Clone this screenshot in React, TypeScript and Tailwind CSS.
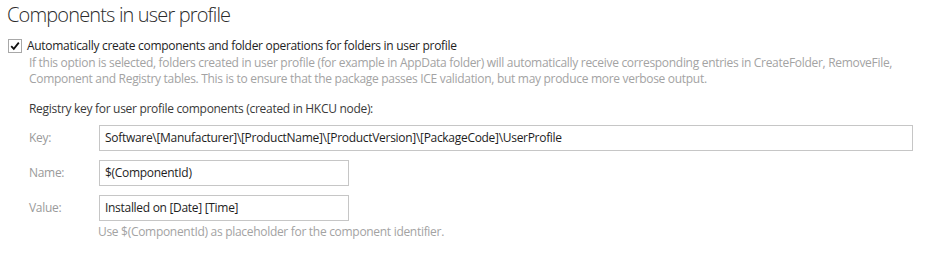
import React from "react";

const font = { fontFamily: '"Open Sans", "Noto Sans", sans-serif' };

function Field({ label, value, wide }: { label: string; value: string; wide?: boolean }) {
  return (
    <div className="flex items-center h-[26px]">
      <div className="w-[70px] text-[12px] text-[#9a9a9a]">{label}</div>
      <div
        className={
          "h-[26px] border border-[#c6c6c6] bg-white flex items-center px-[5px] text-[12px] text-[#1e1e1e] " +
          (wide ? "w-[814px]" : "w-[250px]")
        }
      >
        {value}
      </div>
    </div>
  );
}

export default function App() {
  return (
    <div className="w-[927px] h-[255px] bg-white pl-[7px] tracking-[-0.3px]" style={font}>
      <h2 className="text-[20px] font-light text-[#2b2b2b] leading-[30px] tracking-[-0.85px]">
        Components in user profile
      </h2>

      <div className="flex items-center mt-[8px] h-[16px]">
        <div className="w-[14px] h-[14px] border border-[#a8a8a8] bg-white flex items-center justify-center ml-[1px]">
          <svg width="10" height="10" viewBox="0 0 10 10">
            <path d="M1.2 5.2 L3.8 7.8 L8.8 1.6" fill="none" stroke="#111" strokeWidth="1.8" />
          </svg>
        </div>
        <span className="ml-[5px] text-[12px] text-[#1e1e1e]">
          Automatically create components and folder operations for folders in user profile
        </span>
      </div>

      <div className="ml-[22px] mt-[1px] text-[12px] leading-[16px] text-[#a3a3a3] w-[870px]">
        If this option is selected, folders created in user profile (for example in AppData folder) will automatically receive corresponding entries in CreateFolder, RemoveFile, Component and Registry tables. This is to ensure that the package passes ICE validation, but may produce more verbose output.
      </div>

      <div className="ml-[22px] mt-[14px] text-[12px] text-[#3a3a3a] leading-[16px]">
        Registry key for user profile components (created in HKCU node):
      </div>

      <div className="ml-[22px] mt-[8px] flex flex-col gap-[9px]">
        <Field label="Key:" value="Software\[Manufacturer]\[ProductName]\[ProductVersion]\[PackageCode]\UserProfile" wide />
        <Field label="Name:" value="$(ComponentId)" />
        <Field label="Value:" value="Installed on [Date] [Time]" />
      </div>

      <div className="ml-[91px] mt-[2px] text-[12px] text-[#a3a3a3]">
        Use $(ComponentId) as placeholder for the component identifier.
      </div>
    </div>
  );
}
